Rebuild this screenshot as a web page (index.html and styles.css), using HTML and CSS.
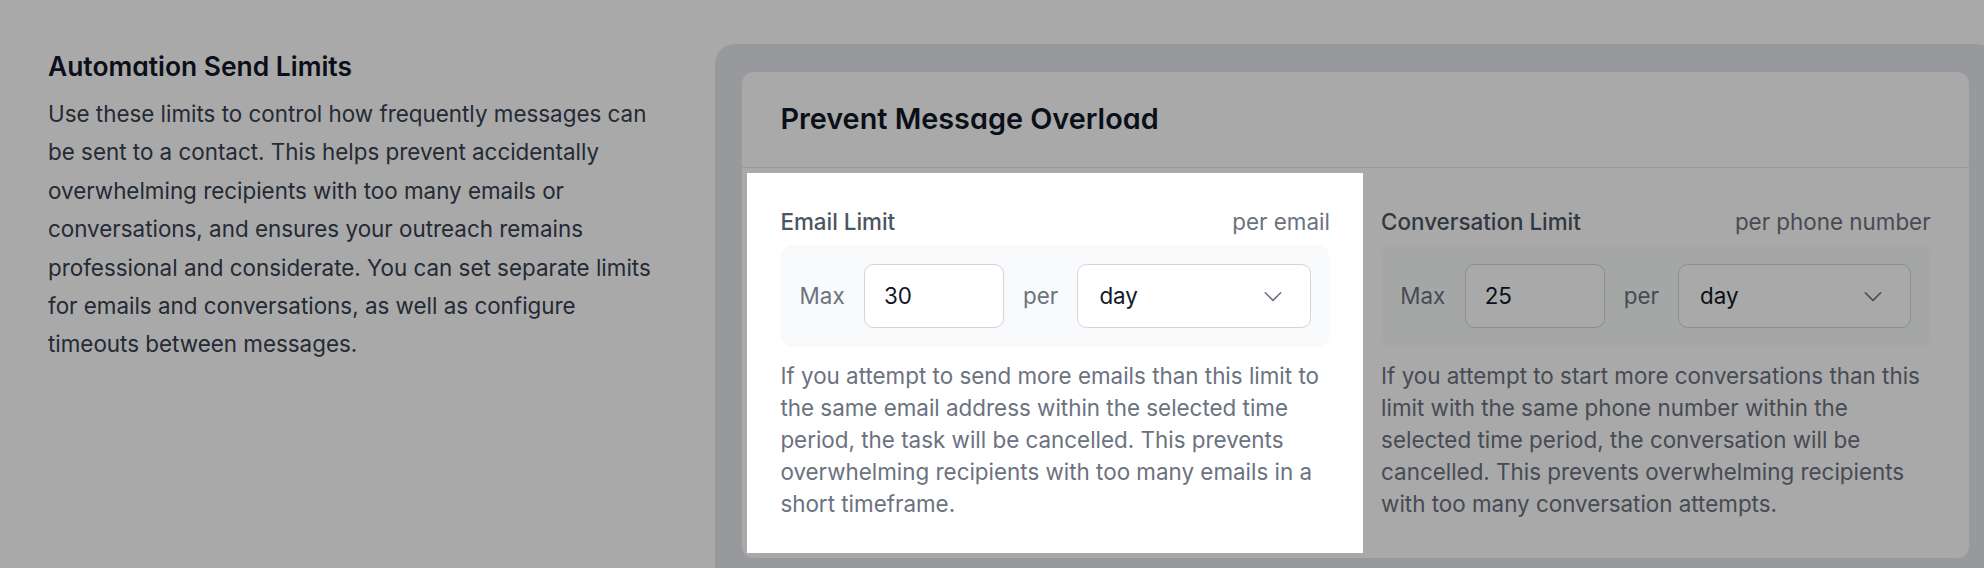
FILE: index.html
```html
<!DOCTYPE html>
<html lang="en">
<head>
  <meta charset="UTF-8" />
  <meta name="viewport" content="width=device-width, initial-scale=1.0"/>
  <title>Automation Send Limits</title>
  <link rel="stylesheet" href="styles.css">
</head>
<body>
  <main class="page">
    <section class="intro">
      <h2>Automation Send Limits</h2>
      <p>Use these limits to control how frequently messages can be sent to a contact. This helps prevent accidentally overwhelming recipients with too many emails or conversations, and ensures your outreach remains professional and considerate. You can set separate limits for emails and conversations, as well as configure timeouts between messages.</p>
    </section>

    <div class="panel">
      <div class="card">
        <div class="card-header">
          <h3>Prevent Message Overload</h3>
        </div>

        <div class="card-body">
          <!-- tour step: email limit is highlighted -->
          <div class="limit spotlight">
            <div class="limit-head">
              <span class="limit-title">Email Limit</span>
              <span class="limit-unit">per email</span>
            </div>
            <div class="limit-row">
              <span class="limit-word">Max</span>
              <input class="limit-input" type="text" value="30"/>
              <span class="limit-word">per</span>
              <div class="limit-select">
                <span>day</span>
                <svg width="22" height="22" viewBox="0 0 20 20" fill="none" stroke="currentColor" stroke-width="1.4" stroke-linecap="round" stroke-linejoin="round"><path d="M3 7l7 7 7-7"/></svg>
              </div>
            </div>
            <p class="limit-note">If you attempt to send more emails than this limit to the same email address within the selected time period, the task will be cancelled. This prevents overwhelming recipients with too many emails in a short timeframe.</p>
          </div>

          <div class="limit">
            <div class="limit-head">
              <span class="limit-title">Conversation Limit</span>
              <span class="limit-unit">per phone number</span>
            </div>
            <div class="limit-row">
              <span class="limit-word">Max</span>
              <input class="limit-input" type="text" value="25"/>
              <span class="limit-word">per</span>
              <div class="limit-select">
                <span>day</span>
                <svg width="22" height="22" viewBox="0 0 20 20" fill="none" stroke="currentColor" stroke-width="1.4" stroke-linecap="round" stroke-linejoin="round"><path d="M3 7l7 7 7-7"/></svg>
              </div>
            </div>
            <p class="limit-note">If you attempt to start more conversations than this limit with the same phone number within the selected time period, the conversation will be cancelled. This prevents overwhelming recipients with too many conversation attempts.</p>
          </div>
        </div>
      </div>
    </div>
  </main>
</body>
</html>
```

FILE: styles.css
```css
body {
  margin: 0;
  background: #fff;
  font-family: Inter, "Noto Sans", sans-serif;
  overflow: hidden;
}

.page {
  display: flex;
  align-items: flex-start;
  gap: 55px;
  padding: 44px 0 0 48px;
}

.intro {
  flex: none;
  width: 612px;
}

.intro h2 {
  margin: 0;
  font-size: 26.4px;
  line-height: 45px;
  font-weight: 600;
  color: #111827;
  font-feature-settings: "cv11";
}

.intro p {
  margin: 6px 0 0;
  font-size: 22.4px;
  line-height: 38.4px;
  color: #374151;
}

.panel {
  flex: none;
  width: 1281px;
  height: 600px;
  padding: 27px 26px;
  box-sizing: border-box;
  background: #e5e7eb;
  border-radius: 20px;
}

.card {
  background: #fff;
  border: 1px solid #e5e7eb;
  border-radius: 12.8px;
}

.card-header {
  padding: 25px 38.4px;
  border-bottom: 1px solid #e5e7eb;
}

.card-header h3 {
  margin: 0;
  font-size: 28.8px;
  line-height: 44.8px;
  font-weight: 600;
  color: #111827;
  font-feature-settings: "cv11";
}

.card-body {
  display: grid;
  grid-template-columns: 1fr 1fr;
  gap: 51.2px;
  padding: 38.4px;
}

.limit-head {
  display: flex;
  justify-content: space-between;
  align-items: baseline;
  font-size: 22.4px;
  line-height: 32px;
}

.limit-title {
  font-weight: 500;
  color: #4b5563;
}

.limit-unit {
  color: #6b7280;
}

.limit-row {
  display: flex;
  align-items: center;
  gap: 19.2px;
  margin-top: 6.4px;
  padding: 19.2px;
  background: #f9fafb;
  border-radius: 12.8px;
}

.limit-word {
  font-size: 22.4px;
  color: #6b7280;
}

.limit-input,
.limit-select {
  height: 64px;
  box-sizing: border-box;
  border: 1px solid #d1d5db;
  border-radius: 9.6px;
  background: #fff;
  font-family: inherit;
  font-size: 22.4px;
  color: #111827;
}

.limit-input {
  width: 140px;
  padding: 0 19.2px;
  outline: none;
}

.limit-select {
  flex: 1;
  display: flex;
  align-items: center;
  justify-content: space-between;
  padding: 0 26px 0 21px;
}

.limit-select svg {
  color: #6b7280;
}

.limit-note {
  margin: 12.8px 0 0;
  font-size: 22.4px;
  line-height: 32px;
  color: #6b7280;
}

/* onboarding tour: dims the page around the current step */
.spotlight {
  position: relative;
  z-index: 10;
}

.spotlight::before {
  content: "";
  position: absolute;
  inset: -33px;
  z-index: -1;
  background: #fff;
  box-shadow: 0 0 0 3000px rgba(0, 0, 0, 0.337);
}
```
